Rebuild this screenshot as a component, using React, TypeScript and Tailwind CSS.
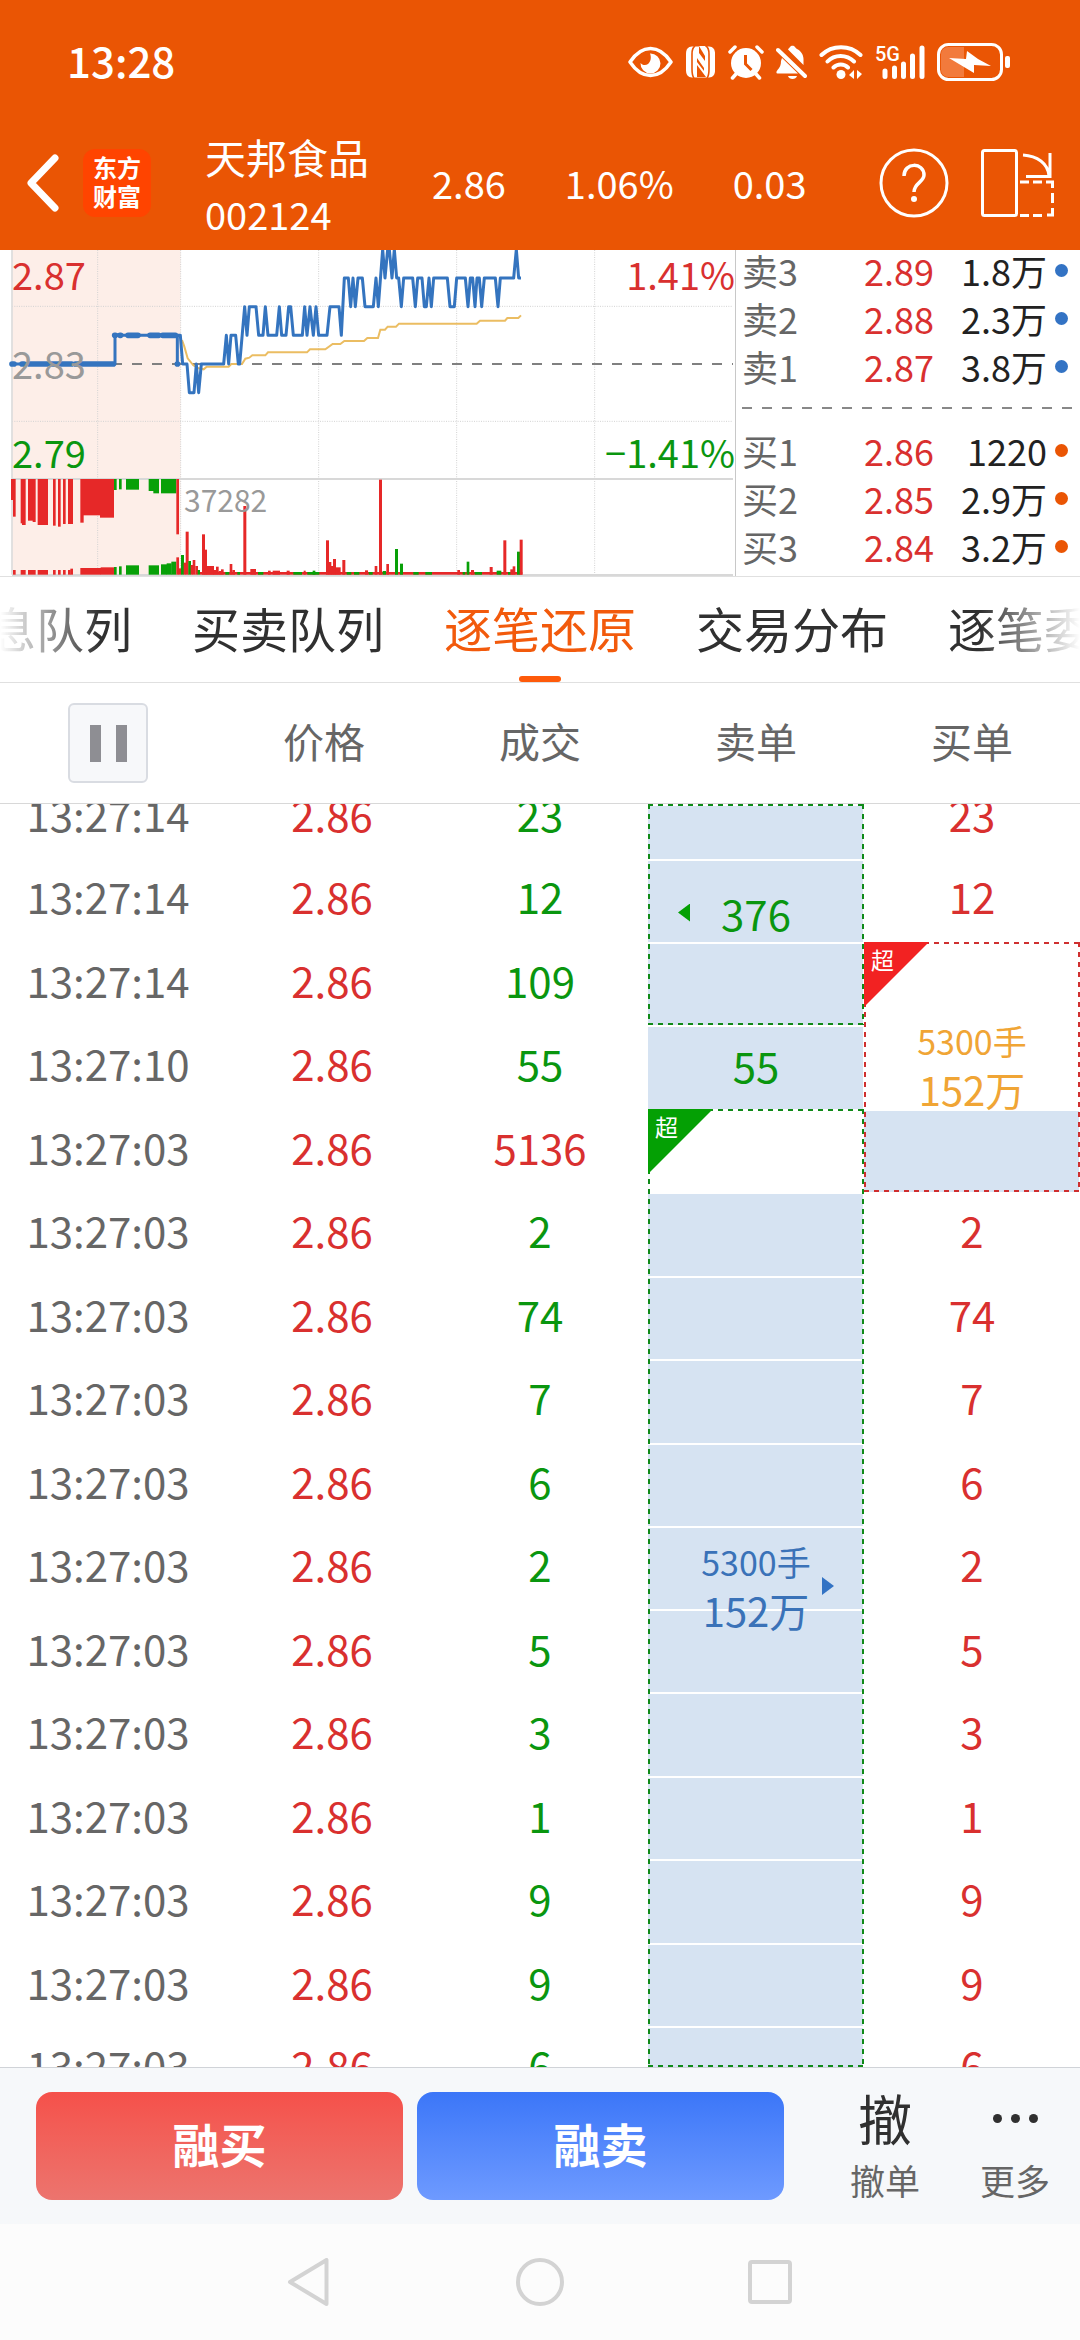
import React from "react";

type Tone = "red" | "green";

const toneText: Record<Tone, string> = {
  red: "text-[#d9302f]",
  green: "text-[#0a960f]",
};

/* ---------- Status bar ---------- */

function StatusBar() {
  return (
    <div className="flex h-[124px] items-center justify-between pr-[70px] pl-[67px]">
      <span className="pb-1 text-[42px] leading-none font-medium">13:28</span>
      <div className="flex items-center gap-3">
        <svg width="45" height="34" viewBox="0 0 45 34" fill="none">
          <path d="M2 17C8 8 15 3.500 22.500 3.500S37 8 43 17C37 26 30 30.500 22.500 30.500S8 26 2 17Z" stroke="#fff" strokeWidth="3.500" strokeLinejoin="round" />
          <path d="M22 8.500a10 10 0 1 1-9.500 9.500c1.500 2 5 3 7.500 1 3-2.500 3.500-7 2-10.500Z" fill="#fff" />
        </svg>
        <svg width="31" height="34" viewBox="0 0 31 34" fill="none">
          <path d="M7 1.500h17c4 0 6 3 6 7v17c0 4-2 7-6 7H7c-4 0-6-3-6-7v-17c0-4 2-7 6-7Z" fill="#fff" />
          <path d="M10 1c-3 2-3 5-3 8v15c0 4 0 7 2 9M21 1c3 2 3 5 3 8v15c0 4 0 7-2 9" stroke="#ea5504" strokeWidth="1.600" />
          <path d="M12 13l7 10v3l-7-9Z M12 20l9 12h-9Z M14 1h6v15l-6-8Z" fill="#ea5504" />
          <path d="M14 1l6 10v-10" fill="#fff" />
        </svg>
        <svg width="36" height="36" viewBox="0 0 36 36" fill="none" stroke="#fff" strokeLinecap="round">
          <circle cx="18" cy="19" r="15" fill="#fff" stroke="none" />
          <path d="M2 8l5-5M34 8l-5-5M8 30l-3.500 4M28 30l3.500 4" strokeWidth="3.500" />
          <path d="M17.500 11v9l6 6" stroke="#ea5504" strokeWidth="3" strokeLinecap="butt" />
        </svg>
        <svg width="31" height="36" viewBox="0 0 31 36" fill="none">
          <path d="M2 6l27 26" stroke="#fff" strokeWidth="4" strokeLinecap="round" />
          <path d="M12 5.500c1-1.500 1.500-1.500 2-2.500 1-1.700 4-1.700 5 0 .5 1 1 1 2 2 4 2 6.500 6 6.500 10v6Z" fill="#fff" />
          <path d="M6 14l16 15.500H1.500c-1.500 0-1.500-2 0-3.500C4 23.500 5 21 5 17Z" fill="#fff" />
          <path d="M12 32h9c-1 4-8 4-9 0Z" fill="#fff" />
        </svg>
        <svg width="44" height="36" viewBox="0 0 44 36" fill="none" stroke="#fff" strokeLinecap="round" strokeWidth="4">
          <path d="M2.500 11C13 .500 31 .500 41.500 11M8.500 17.500c7-7.500 19-7.500 26.500 0M14.500 23.500c4-4 10.500-4 14.500 0" />
          <circle cx="22" cy="30.500" r="4.500" fill="#fff" stroke="none" />
          <path d="M35 26v9l-5-4Z M38 26v9l5-5Z" fill="#fff" stroke="none" />
        </svg>
        <div className="relative">
          <span className="absolute top-0 left-0 font-['Roboto'] text-[20px] leading-none font-medium">5G</span>
          <svg width="50" height="36" viewBox="0 0 50 36" stroke="#fff" strokeWidth="5" strokeLinecap="round">
            <path d="M10 27v5.500M19.500 24v8.500M28.500 20v12.500M37.500 12v20.500M47 4v28.500" />
          </svg>
        </div>
        <svg width="73" height="38" viewBox="0 0 73 38" fill="none">
          <rect x="1.500" y="1.500" width="63" height="35" rx="10" stroke="#fff" strokeWidth="3" />
          <path d="M11 4h16v30H11a7 7 0 0 1-7-7V11a7 7 0 0 1 7-7Z" fill="#f27a3c" />
          <path d="M30 8l11 8 13 7-17-1v8L12 15l17 1Z" fill="#fff" />
          <rect x="68" y="13" width="5" height="12" rx="2" fill="#fff" />
        </svg>
      </div>
    </div>
  );
}

/* ---------- Stock header ---------- */

function StockHeader() {
  return (
    <div className="flex h-[126px] items-center pr-[26px] pb-[9px] pl-[27px]">
      <button aria-label="返回" className="shrink-0">
        <svg width="32" height="58" viewBox="0 0 32 58" fill="none" stroke="#fff" strokeWidth="7" strokeLinecap="round" strokeLinejoin="round">
          <path d="M28 4L4 29l24 25" />
        </svg>
      </button>
      <div className="ml-6 flex h-[68px] w-[68px] shrink-0 flex-col items-center justify-center rounded-xl bg-[#ff4400] pb-1 text-[24px] leading-[29px] font-bold">
        <span>东方</span>
        <span>财富</span>
      </div>
      <div className="ml-[54px] flex flex-col pt-1">
        <h1 className="text-[41px] leading-[58px]">天邦食品</h1>
        <span className="text-[38px] leading-[58px]">002124</span>
      </div>
      <div className="ml-[63px] flex gap-[59px] text-[38px] leading-none">
        <span>2.86</span>
        <span>1.06%</span>
        <span>0.03</span>
      </div>
      <div className="ml-auto flex items-center gap-8">
        <button aria-label="帮助">
          <svg width="70" height="70" viewBox="0 0 70 70" fill="none" stroke="#fff" strokeWidth="3">
            <circle cx="35" cy="35" r="33" />
            <path d="M25 28c0-14 20-14 20-1 0 7-10 8-10 17" strokeWidth="3.500" />
            <circle cx="35" cy="51" r="3" fill="#fff" stroke="none" />
          </svg>
        </button>
        <button aria-label="横屏">
          <svg width="73" height="68" viewBox="0 0 73 68" fill="none" stroke="#fff" strokeWidth="3">
            <rect x="1.500" y="1.500" width="34" height="65" rx="2" />
            <path d="M42 6c14 1 25 8 26 21M69 4v23.500H45" />
            <path d="M39 33h9M52 33h9M65 33h6.500v6M71.500 44v10M71.500 59v7H66M61 66.500h-9M48 66.500h-9" />
          </svg>
        </button>
      </div>
    </div>
  );
}

/* ---------- Intraday chart ---------- */

type Bar = [x: number, w: number, top: number, tone: Tone];

// Call-auction bars that hang from the divider
const hanging: Bar[] = [
  [33, 9, 780, "red"], [39, 8, 830, "red"], [62, 6, 850, "red"], [66, 11, 855, "red"], [84, 16, 842, "red"],
  [98, 9, 846, "red"], [113, 31, 855, "red"], [159, 8, 857, "red"], [174, 8, 860, "red"], [189, 8, 852, "red"],
  [204, 15, 852, "red"], [241, 10, 848, "red"], [249, 54, 826, "red"], [300, 42, 833, "red"],
  [342, 8, 750, "green"], [357, 8, 748, "green"], [378, 39, 749, "green"], [446, 16, 753, "green"],
  [460, 17, 760, "green"], [483, 46, 760, "green"], [529, 8, 883, "red"],
];

const volume: Bar[] = [
  [39, 8, 990, "red"], [62, 15, 990, "red"], [84, 23, 990, "red"], [113, 31, 990, "red"], [159, 8, 990, "red"],
  [174, 8, 990, "red"], [189, 8, 990, "red"], [204, 8, 990, "red"], [211, 8, 986, "red"], [241, 62, 984, "red"],
  [302, 40, 982, "red"], [342, 8, 981, "green"], [357, 8, 979, "green"], [378, 39, 976, "green"],
  [446, 31, 976, "green"], [483, 18, 973, "green"], [500, 15, 970, "green"], [514, 15, 965, "green"],
  [529, 8, 952, "red"], [536, 8, 985, "red"], [543, 9, 945, "green"], [551, 7, 968, "red"], [557, 9, 875, "red"],
  [565, 8, 963, "green"], [572, 7, 975, "red"], [578, 8, 960, "red"], [586, 8, 978, "red"], [593, 7, 990, "green"],
  [600, 967, 996, "red"], [606, 9, 883, "red"], [614, 7, 929, "red"], [620, 22, 978, "red"],
  [640, 8, 990, "red"], [648, 8, 980, "red"], [656, 7, 993, "red"], [663, 8, 988, "red"], [676, 12, 996, "green"],
  [689, 8, 972, "red"], [697, 8, 990, "red"], [712, 8, 996, "green"], [730, 9, 798, "red"], [751, 17, 987, "red"],
  [774, 16, 996, "green"], [804, 8, 992, "red"], [818, 22, 992, "red"], [860, 9, 992, "red"], [880, 26, 996, "green"],
  [911, 6, 992, "red"], [922, 36, 996, "green"], [938, 8, 992, "green"], [978, 9, 901, "red"], [986, 8, 966, "red"],
  [993, 7, 978, "red"], [999, 9, 957, "red"], [1007, 15, 982, "red"], [1027, 9, 960, "red"],
  [1040, 14, 996, "green"], [1062, 16, 996, "green"], [1095, 9, 991, "red"], [1106, 12, 996, "green"],
  [1124, 8, 978, "red"], [1137, 9, 719, "red"], [1148, 10, 993, "green"], [1159, 8, 972, "red"],
  [1185, 9, 927, "green"], [1200, 9, 971, "green"], [1240, 16, 996, "green"], [1276, 20, 996, "green"],
  [1372, 8, 990, "red"], [1388, 8, 996, "green"], [1400, 8, 965, "green"], [1413, 9, 990, "red"],
  [1424, 22, 996, "green"], [1469, 9, 981, "red"], [1490, 14, 992, "green"], [1510, 9, 901, "red"],
  [1524, 8, 996, "green"], [1531, 8, 988, "red"], [1538, 8, 979, "red"], [1551, 9, 935, "green"], [1559, 9, 899, "red"],
];

const barFill: Record<Tone, string> = { red: "#e62828", green: "#08a008" };

function Chart() {
  return (
    <div className="relative h-[326px] min-w-0 flex-1 border-r border-[#c8c8c8]">
      <svg className="block h-full w-full" viewBox="0 30 2205 978" preserveAspectRatio="none" fill="none">
        <rect x="36" y="30" width="506" height="974" fill="#fdeee8" />
        <g stroke="#d2d2d2" strokeWidth="3" strokeDasharray="3 4">
          <path d="M293 30V1004M542 30V1004M956 30V1004M1370 30V1004M1784 30V1004M36 199H2199M36 544H2199" />
        </g>
        <path d="M36 30V1004" stroke="#dcdcdc" strokeWidth="5" />
        <path d="M36 717H2199M36 1005H2199" stroke="#d8d8d8" strokeWidth="6" />
        <path d="M336 372H2199" stroke="#808080" strokeWidth="6" strokeDasharray="30 30" />
        {hanging.map(([x, w, bottom, tone], i) => (
          <rect key={i} x={x} y="717" width={w} height={bottom - 717} fill={barFill[tone]} />
        ))}
        {volume.map(([x, w, top, tone], i) => (
          <rect key={i} x={x} y={top} width={w} height={1004 - top} fill={barFill[tone]} />
        ))}
        <path
          d="M546 300L553 320L563 355L580 376L596 385L611 388L620 380H686L694 372H726L736 356L748 353L757 346H796L804 337H921L930 328H976L998 312H1021L1033 303H1092L1102 294H1134L1141 269H1155L1163 260H1188L1197 251H1430L1440 242H1515L1522 234H1555L1563 226"
          stroke="#ebbd62"
          strokeWidth="6"
        />
        <path
          d="M36 372H345V286H532V372M532 286H541L548 372H561L568 458H582L589 372L596 458L604 372H671L679 286L686 372L693 286H707L715 372H719L734 200L741 286L748 200H768L776 286H789L796 200L804 286H830L838 200L845 286H858L866 200H872L880 286H907L914 200L921 286L930 200L940 286L948 200L956 286H981L990 200H1017L1024 286L1033 114H1045L1052 200L1059 114L1066 200L1074 114H1087L1095 200H1120L1128 114L1135 200L1148 28L1155 114L1163 28H1168L1176 114L1183 28L1190 114H1196L1204 200L1211 114H1238L1246 200L1253 114H1266L1273 200H1279L1287 114L1294 200L1301 114H1342L1350 200H1363L1370 114H1396L1404 200L1411 114H1418L1425 200L1431 114H1438L1445 200L1453 114H1486L1494 200L1501 114H1541L1549 28L1556 114H1563"
          stroke="#3474bf"
          strokeWidth="9"
          strokeLinejoin="round"
        />
        <path
          d="M36 372H42M66 372H72M88 372H140M152 372H215M226 372H340M344 286H346M360 286H362M384 286H414M450 286H476M488 286H526M532 372H532.500"
          stroke="#3474bf"
          strokeWidth="17"
          strokeLinecap="round"
        />
      </svg>
      <div className="pointer-events-none absolute inset-0 text-[38px] leading-[40px]">
        <span className="absolute top-1 left-3 text-[#d9302f]">2.87</span>
        <span className="absolute top-[93px] left-3 text-[#999999]">2.83</span>
        <span className="absolute top-[182px] left-3 text-[#0a960f]">2.79</span>
        <span className="absolute top-1 right-0 text-[#d9302f]">1.41%</span>
        <span className="absolute top-[182px] right-0 text-[#0a960f]">−1.41%</span>
        <span className="absolute top-[229px] left-[184px] text-[30px] text-[#999999]">37282</span>
      </div>
    </div>
  );
}

/* ---------- Order book ---------- */

const asks = [
  ["卖3", "2.89", "1.8万"],
  ["卖2", "2.88", "2.3万"],
  ["卖1", "2.87", "3.8万"],
];
const bids = [
  ["买1", "2.86", "1220"],
  ["买2", "2.85", "2.9万"],
  ["买3", "2.84", "3.2万"],
];

function BookSide({ rows, dot }: { rows: string[][]; dot: string }) {
  return (
    <table className="w-full table-fixed text-[36px] leading-[46px]">
      <tbody>
        {rows.map(([label, price, amount]) => (
          <tr key={label} className="h-12 align-top">
            <th scope="row" className="w-[94px] p-0 text-left font-normal text-[#666666]">{label}</th>
            <td className="w-[98px] p-0 text-right text-[#d9302f]">{price}</td>
            <td className="p-0">
              <div className="flex items-center justify-end gap-2 pr-[12px] text-[#222222]">
                {amount}
                <i className={"h-[13px] w-[13px] rounded-full " + dot} />
              </div>
            </td>
          </tr>
        ))}
      </tbody>
    </table>
  );
}

function OrderBook() {
  return (
    <div className="-mt-[3px] flex w-[344px] shrink-0 flex-col pl-[6px]">
      <BookSide rows={asks} dot="bg-[#3373c4]" />
      <div className="mt-4 mr-2 mb-[18px] h-[2px] bg-[repeating-linear-gradient(90deg,#888_0_10px,transparent_10px_20px)]" />
      <BookSide rows={bids} dot="bg-[#ea5504]" />
    </div>
  );
}

/* ---------- Tabs ---------- */

const tabs = ["消息队列", "买卖队列", "逐笔还原", "交易分布", "逐笔委托"];

function Tabs() {
  return (
    <nav className="overflow-hidden border-y border-[#e0e0e0]">
      <div
        role="tablist"
        className="flex h-[105px] justify-center gap-[60px] [mask-image:linear-gradient(90deg,transparent,#000_100px,#000_calc(100%-100px),transparent)]"
      >
        {tabs.map((t, i) => (
          <button
            key={t}
            role="tab"
            aria-selected={i === 2}
            className={
              "relative shrink-0 pb-[6px] text-[48px] leading-none whitespace-nowrap " +
              (i === 2 ? "text-[#f25a0c]" : "text-[#303030]")
            }
          >
            {t}
            {i === 2 && <i className="absolute bottom-0 left-1/2 h-[6px] w-[42px] -translate-x-1/2 rounded-full bg-[#fe5a0a]" />}
          </button>
        ))}
      </div>
    </nav>
  );
}

/* ---------- Tick table ---------- */

interface Tick {
  time: string;
  volume: string;
  tone: Tone;
  buy?: string;
}

const ticks: Tick[] = [
  { time: "13:27:14", volume: "23", tone: "green", buy: "23" },
  { time: "13:27:14", volume: "12", tone: "green", buy: "12" },
  { time: "13:27:14", volume: "109", tone: "green" },
  { time: "13:27:10", volume: "55", tone: "green" },
  { time: "13:27:03", volume: "5136", tone: "red" },
  { time: "13:27:03", volume: "2", tone: "green", buy: "2" },
  { time: "13:27:03", volume: "74", tone: "green", buy: "74" },
  { time: "13:27:03", volume: "7", tone: "green", buy: "7" },
  { time: "13:27:03", volume: "6", tone: "green", buy: "6" },
  { time: "13:27:03", volume: "2", tone: "green", buy: "2" },
  { time: "13:27:03", volume: "5", tone: "green", buy: "5" },
  { time: "13:27:03", volume: "3", tone: "green", buy: "3" },
  { time: "13:27:03", volume: "1", tone: "green", buy: "1" },
  { time: "13:27:03", volume: "9", tone: "green", buy: "9" },
  { time: "13:27:03", volume: "9", tone: "green", buy: "9" },
  { time: "13:27:03", volume: "6", tone: "green", buy: "6" },
];

// The first and last rows are scrolled partly out of view
const heightOf = (i: number) => (i === 0 ? 54 : i === ticks.length - 1 ? 40 : i % 2 ? 84 : 83);

function Slot({ row, children }: { row: number; children?: React.ReactNode }) {
  return (
    <div
      className={"flex justify-center overflow-hidden " + (row === 0 ? "items-end" : "items-start")}
      style={{ height: heightOf(row) }}
    >
      <span className="mb-[6px] leading-[76px]">{children}</span>
    </div>
  );
}

interface BlockProps {
  start: number;
  span: number;
  plain: number[];
  tone?: Tone;
  big?: boolean;
  children: React.ReactNode;
}

const edge: Record<Tone, string> = {
  red: "text-[#cf2f2f]",
  green: "text-[#108a18]",
};
const corner: Record<Tone, string> = { red: "bg-[#f22222]", green: "bg-[#04a004]" };

function DashedFrame({ tone }: { tone: Tone }) {
  const across = "absolute inset-x-0 h-[2px] bg-[repeating-linear-gradient(90deg,currentColor_0_5px,transparent_5px_10px)] ";
  const down = "absolute inset-y-0 w-[2px] bg-[repeating-linear-gradient(180deg,currentColor_0_5px,transparent_5px_10px)] ";
  return (
    <div className={"absolute inset-0 " + edge[tone]}>
      <i className={across + "top-0"} />
      <i className={across + "bottom-0"} />
      <i className={down + "left-0"} />
      <i className={down + "right-0"} />
    </div>
  );
}

function OrderBlock({ start, span, plain, tone, big, children }: BlockProps) {
  return (
    <td rowSpan={span} className="relative p-0">
      <div className="absolute inset-y-0 right-px left-0 flex flex-col">
        {Array.from({ length: span }, (_, k) => (
          <div
            key={k}
            className={"basis-0 border-t-2 border-white " + (plain.includes(start + k) ? "bg-white" : "bg-[#d6e3f2]")}
            style={{ flexGrow: heightOf(start + k) }}
          />
        ))}
      </div>
      {tone && <DashedFrame tone={tone} />}
      {tone && big && (
        <span
          className={
            "absolute top-0 left-0 h-[65px] w-[65px] pt-[6px] pl-[7px] text-left text-[23px] leading-none text-white [clip-path:polygon(0_0,100%_0,0_100%)] " +
            corner[tone]
          }
        >
          超
        </span>
      )}
      <div className="absolute inset-0 flex flex-col items-center justify-center pb-1">{children}</div>
    </td>
  );
}

function BigOrder({ color }: { color: string }) {
  return (
    <div className={"flex flex-col items-center leading-[49px] " + color}>
      <span className="text-[34px]">5300手</span>
      <span className="text-[40px]">152万</span>
    </div>
  );
}

function TickTable() {
  return (
    <table className="w-full table-fixed border-separate border-spacing-0 text-center text-[42px] leading-none">
      <thead>
        <tr className="h-[121px] text-[#666666]">
          <th className="border-b border-[#d8d8d8] p-0 font-normal">
            <button
              aria-label="暂停"
              className="mx-auto flex h-20 w-20 items-center justify-center gap-[15px] rounded-md border-2 border-[#d9dce2] bg-[#f7f8fa]"
            >
              <i className="h-[37px] w-[11px] bg-[#8e8e93]" />
              <i className="h-[37px] w-[11px] bg-[#8e8e93]" />
            </button>
          </th>
          {["价格", "成交", "卖单", "买单"].map((h) => (
            <th key={h} scope="col" className="border-b border-[#d8d8d8] p-0 pb-[6px] text-[41px] font-normal">
              {h}
            </th>
          ))}
        </tr>
      </thead>
      <tbody>
        {ticks.map((t, i) => (
          <tr key={i}>
            <td className="p-0 text-[#666666]"><Slot row={i}>{t.time}</Slot></td>
            <td className="p-0 pl-4 text-[#d9302f]"><Slot row={i}>2.86</Slot></td>
            <td className={"p-0 " + toneText[t.tone]}><Slot row={i}>{t.volume}</Slot></td>
            {i === 0 && (
              <OrderBlock start={0} span={3} plain={[]} tone="green">
                <div className="text-[#0a960f]">376</div>
                <i className="absolute left-[30px] h-[18px] w-3 bg-[#04a004] [clip-path:polygon(100%_0,100%_100%,0_50%)]" />
              </OrderBlock>
            )}
            {i === 3 && (
              <OrderBlock start={3} span={1} plain={[]}>
                <div className="text-[#0a960f]">55</div>
              </OrderBlock>
            )}
            {i === 4 && (
              <OrderBlock start={4} span={12} plain={[4]} tone="green" big>
                <BigOrder color="text-[#3a72b8]" />
                <i className="absolute right-[30px] h-[18px] w-3 bg-[#3373c4] [clip-path:polygon(0_0,0_100%,100%_50%)]" />
              </OrderBlock>
            )}
            {i === 2 && (
              <OrderBlock start={2} span={3} plain={[2, 3]} tone="red" big>
                <BigOrder color="text-[#f0a535]" />
              </OrderBlock>
            )}
            {t.buy && <td className="p-0 text-[#d9302f]"><Slot row={i}>{t.buy}</Slot></td>}
          </tr>
        ))}
      </tbody>
    </table>
  );
}

/* ---------- Footer ---------- */

function TradeBar() {
  return (
    <footer className="flex items-center gap-[14px] border-t border-[#d0d3d8] bg-[#f6f8fa] py-6 pl-9">
      <button className="h-[108px] flex-1 rounded-2xl bg-linear-to-b from-[#f5504a] to-[#ec746e] pb-[6px] text-[47px] font-bold text-white">融买</button>
      <button className="h-[108px] flex-1 rounded-2xl bg-linear-to-b from-[#3b76f8] to-[#6e9aff] pb-[6px] text-[47px] font-bold text-white">融卖</button>
      <div className="ml-[22px] flex">
        <button className="flex w-[130px] flex-col items-center text-[#666666]">
          <span className="text-[54px] leading-[52px] text-[#303030]">撤</span>
          <span className="mt-4 text-[35px] leading-[40px]">撤单</span>
        </button>
        <button className="flex w-[130px] flex-col items-center text-[#666666]">
          <span className="flex h-[52px] items-center gap-[9px]">
            <i className="h-[9px] w-[9px] rounded-full bg-[#303030]" />
            <i className="h-[9px] w-[9px] rounded-full bg-[#303030]" />
            <i className="h-[9px] w-[9px] rounded-full bg-[#303030]" />
          </span>
          <span className="mt-4 text-[35px] leading-[40px]">更多</span>
        </button>
      </div>
    </footer>
  );
}

function SystemNav() {
  return (
    <div className="flex h-[116px] items-center justify-center gap-[182px] bg-[#fcfcfc]">
      <button aria-label="后退">
        <svg width="48" height="48" viewBox="0 0 48 48" fill="none" stroke="#d3d3d3" strokeWidth="4" strokeLinejoin="round">
          <path d="M4 24L40.500 2v44Z" />
        </svg>
      </button>
      <button aria-label="主页">
        <svg width="48" height="48" viewBox="0 0 48 48" fill="none" stroke="#d3d3d3" strokeWidth="4">
          <circle cx="24" cy="24" r="22" />
        </svg>
      </button>
      <button aria-label="最近任务">
        <svg width="48" height="48" viewBox="0 0 48 48" fill="none" stroke="#d3d3d3" strokeWidth="4">
          <rect x="4" y="4" width="40" height="40" rx="2" />
        </svg>
      </button>
    </div>
  );
}

export default function App() {
  return (
    <div className="min-h-screen bg-white font-['Noto_Sans_CJK_SC',sans-serif]">
      <header className="bg-[#ea5504] text-white">
        <StatusBar />
        <StockHeader />
      </header>
      <section className="flex h-[326px] overflow-hidden">
        <Chart />
        <OrderBook />
      </section>
      <Tabs />
      <TickTable />
      <TradeBar />
      <SystemNav />
    </div>
  );
}
